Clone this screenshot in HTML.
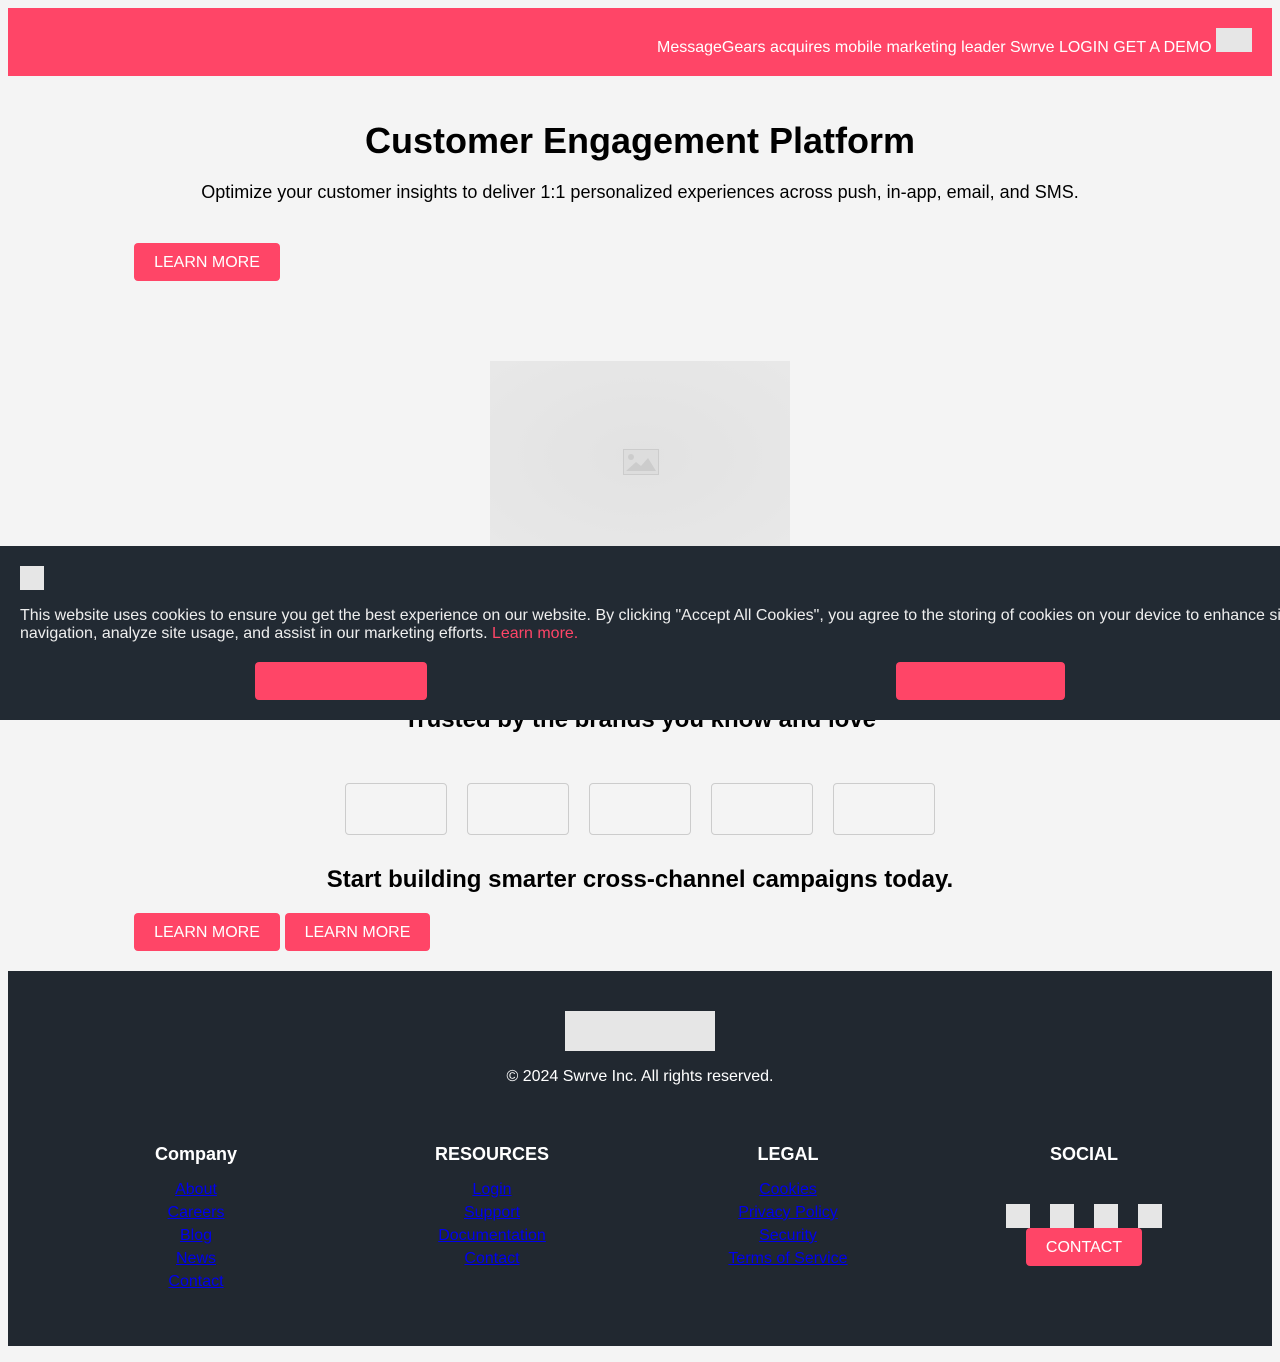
<!DOCTYPE html>
<html><head><meta charset="utf-8"><style>
*{box-sizing:border-box;margin:0;padding:0}
body{width:1280px;height:1362px;background:#f4f4f4;font-family:"Liberation Sans",Arial,sans-serif;position:relative;overflow:hidden;color:#000}
.a{position:absolute}
.hdr{left:8px;top:8px;width:1264px;height:68px;background:#ff4567}
.btn{background:#ff4567;color:#fff;border-radius:4px;font-size:16px;text-align:center;line-height:40px;height:38px}
.ph{background:#e6e6e6}
.c{text-align:center}
.ft{left:8px;top:971px;width:1264px;height:375px;background:#212830}
.col{width:300px;text-align:center;color:#fff}
.col h4{font-size:18px;font-weight:bold;height:34px;line-height:20px}
.col a{display:block;color:#0000ee;text-decoration:underline;font-size:16px;line-height:23px}
.logo{top:783px;width:102px;height:52px;border:1px solid #ccc;border-radius:4px}
</style></head><body>
<div class="a hdr"></div>
<div class="a" style="left:657px;top:39px;color:#fff;font-size:16px;white-space:nowrap">MessageGears acquires mobile marketing leader Swrve LOGIN GET A DEMO</div>
<div class="a ph" style="left:1216px;top:28px;width:36px;height:24px"></div>

<div class="a c" style="left:0;top:120px;width:1280px;font-size:36px;font-weight:bold">Customer Engagement Platform</div>
<div class="a c" style="left:0;top:182px;width:1280px;font-size:18px">Optimize your customer insights to deliver 1:1 personalized experiences across push, in-app, email, and SMS.</div>
<div class="a btn" style="left:134px;top:243px;width:146px">LEARN MORE</div>

<div class="a" style="left:490px;top:361px;width:300px;height:190px;background:radial-gradient(#e2e2e2,#e8e8e8)">
<svg style="position:absolute;left:133px;top:88px" width="36" height="26" viewBox="0 0 36 26"><rect x="0.5" y="0.5" width="35" height="25" fill="#ddd" stroke="#ccc"/><circle cx="8" cy="8" r="3" fill="#ccc"/><path d="M3 22 L13 13 L18 17 L25 9 L33 22Z" fill="#ccc"/></svg>
</div>

<div class="a c" style="left:0;top:706px;width:1280px;font-size:24px;font-weight:bold">Trusted by the brands you know and love</div>

<div class="a" style="left:0;top:546px;width:1280px;height:174px;background:#222a33"></div>
<div class="a ph" style="left:20px;top:566px;width:24px;height:24px"></div>
<div class="a" style="left:20px;top:607px;width:1300px;color:#eee;font-size:16px;line-height:18px;white-space:nowrap">This website uses cookies to ensure you get the best experience on our website. By clicking "Accept All Cookies", you agree to the storing of cookies on your device to enhance site<br>navigation, analyze site usage, and assist in our marketing efforts. <span style="color:#ff4567">Learn more.</span></div>
<div class="a btn" style="left:255px;top:662px;width:172px"></div>
<div class="a btn" style="left:896px;top:662px;width:169px"></div>

<div class="a logo" style="left:345px"></div>
<div class="a logo" style="left:467px"></div>
<div class="a logo" style="left:589px"></div>
<div class="a logo" style="left:711px"></div>
<div class="a logo" style="left:833px"></div>

<div class="a c" style="left:0;top:866px;width:1280px;font-size:24px;font-weight:bold">Start building smarter cross-channel campaigns today.</div>
<div class="a btn" style="left:134px;top:913px;width:146px">LEARN MORE</div>
<div class="a btn" style="left:285px;top:913px;width:145px">LEARN MORE</div>

<div class="a ft"></div>
<div class="a ph" style="left:565px;top:1011px;width:150px;height:40px"></div>
<div class="a c" style="left:0;top:1068px;width:1280px;color:#fff;font-size:16px">© 2024 Swrve Inc. All rights reserved.</div>

<div class="a col" style="left:46px;top:1144px"><h4>Company</h4><a>About</a><a>Careers</a><a>Blog</a><a>News</a><a>Contact</a></div>
<div class="a col" style="left:342px;top:1144px"><h4>RESOURCES</h4><a>Login</a><a>Support</a><a>Documentation</a><a>Contact</a></div>
<div class="a col" style="left:638px;top:1144px"><h4>LEGAL</h4><a>Cookies</a><a>Privacy Policy</a><a>Security</a><a>Terms of Service</a></div>
<div class="a col" style="left:934px;top:1144px"><h4>SOCIAL</h4></div>
<div class="a ph" style="left:1006px;top:1204px;width:24px;height:24px"></div>
<div class="a ph" style="left:1050px;top:1204px;width:24px;height:24px"></div>
<div class="a ph" style="left:1094px;top:1204px;width:24px;height:24px"></div>
<div class="a ph" style="left:1138px;top:1204px;width:24px;height:24px"></div>
<div class="a btn" style="left:1026px;top:1228px;width:116px">CONTACT</div>
</body></html>
